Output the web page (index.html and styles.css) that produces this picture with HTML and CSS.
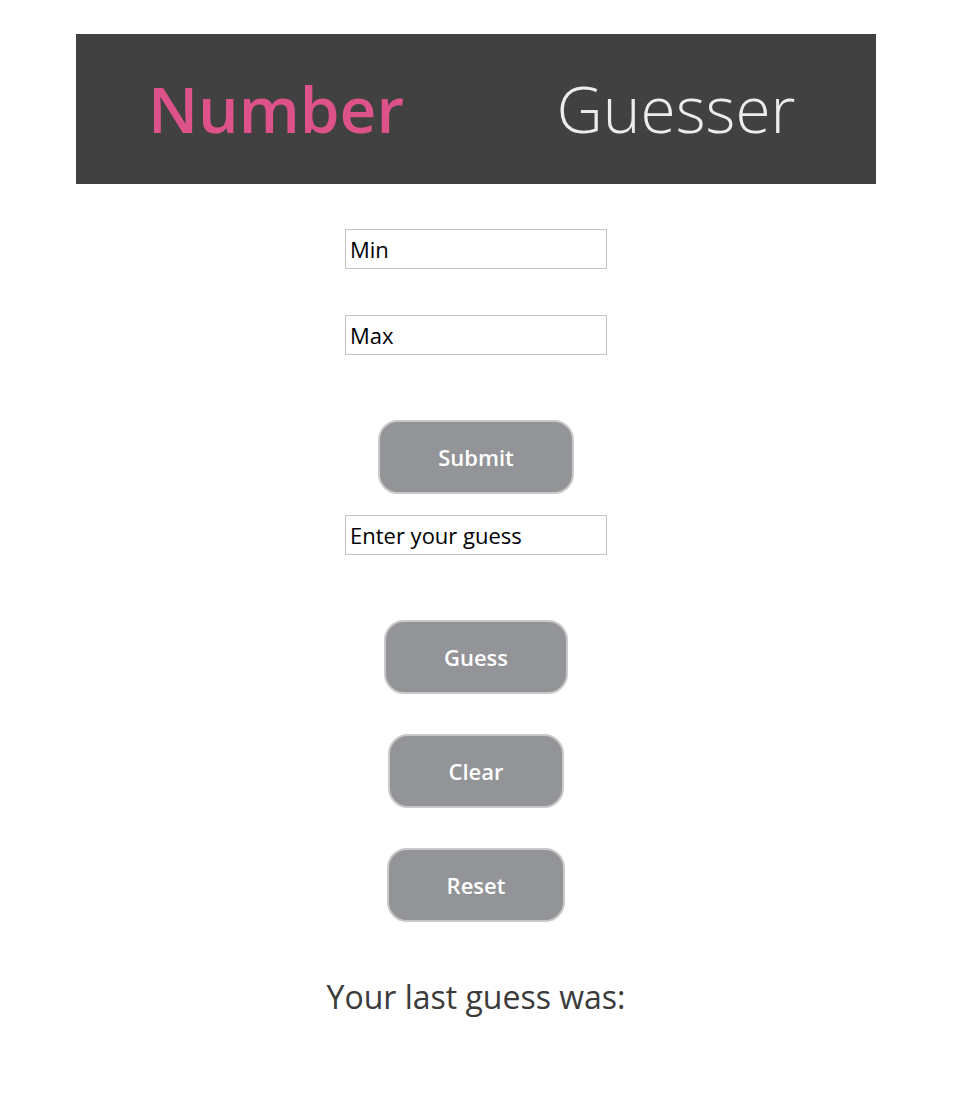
FILE: index.html
```html
<!DOCTYPE html>
<html lang="en">
<head>
<meta charset="utf-8">
<title>Number Guesser</title>
<link rel="stylesheet" href="styles.css">
</head>
<body>
<div class="page">
  <header class="banner">
    <h1 class="title title-pink">Number</h1>
    <h1 class="title title-light">Guesser</h1>
  </header>
  <main class="game">
    <input class="field field-min" type="text" value="Min">
    <input class="field field-max" type="text" value="Max">
    <button class="btn btn-submit">Submit</button>
    <input class="field field-guess" type="text" value="Enter your guess">
    <button class="btn btn-guess">Guess</button>
    <button class="btn btn-clear">Clear</button>
    <button class="btn btn-reset">Reset</button>
    <p class="last">Your last guess was:</p>
  </main>
</div>
</body>
</html>
```
FILE: styles.css
```css
html, body {
  margin: 0;
  padding: 0;
  background: #ffffff;
}
body {
  font-family: "Open Sans", "Liberation Sans", sans-serif;
}
.page {
  width: 800px;
  margin: 34px 0 0 76px;
}
.banner {
  display: flex;
  height: 150px;
  background: #414141;
}
.title {
  flex: 1;
  margin: 0;
  text-align: center;
  font-size: 64px;
  line-height: 150px;
}
.title-pink {
  color: #dc5289;
  font-weight: 600;
}
.title-light {
  color: #ececec;
  font-weight: 300;
}
.game {
  display: flex;
  flex-direction: column;
  align-items: center;
}
.field {
  box-sizing: border-box;
  width: 262px;
  height: 40px;
  border: 1px solid #c2c2c2;
  padding: 0 4px;
  font-family: "Open Sans", "Liberation Sans", sans-serif;
  font-size: 22px;
  color: #000;
  background: #fff;
  outline: none;
}
.field-min { margin-top: 45px; }
.field-max { margin-top: 46px; }
.field-guess { margin-top: 21px; }
.btn {
  box-sizing: border-box;
  height: 74px;
  padding: 0 58px;
  border: 2px solid #c9c9ca;
  border-radius: 20px;
  background: #939497;
  color: #ffffff;
  font-family: "Open Sans", "Liberation Sans", sans-serif;
  font-weight: 600;
  font-size: 22px;
}
.btn-submit { margin-top: 65px; }
.btn-guess { margin-top: 65px; }
.btn-clear { margin-top: 40px; }
.btn-reset { margin-top: 40px; }
.last {
  margin: 48px 0 0;
  font-size: 32px;
  line-height: 54px;
  color: #3b3b3b;
}
```
